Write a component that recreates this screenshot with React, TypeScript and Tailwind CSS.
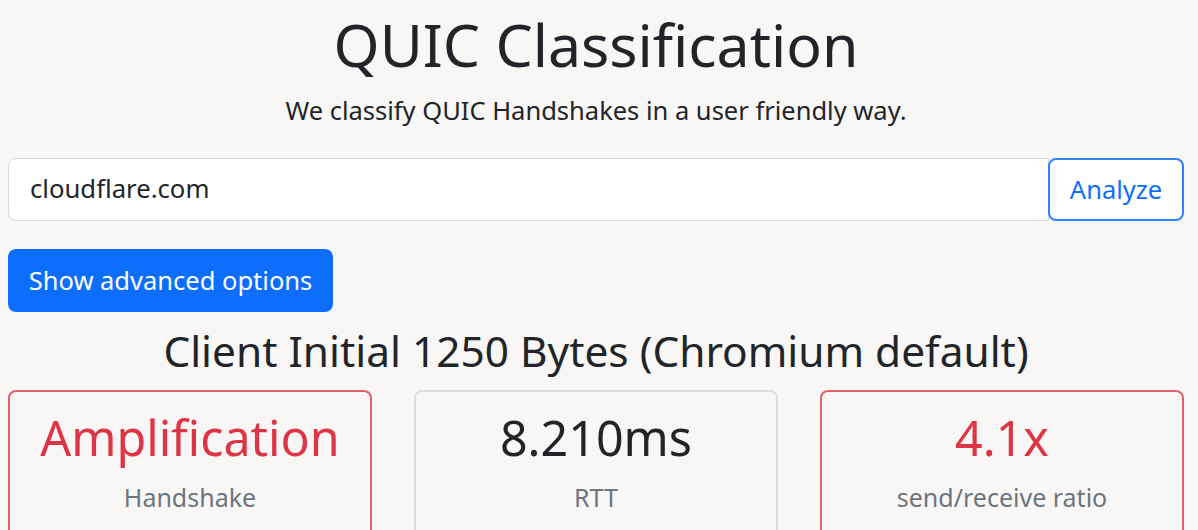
import React from "react";

export default function App() {
  return (
    <div
      className="h-[530px] overflow-hidden w-full bg-[#f8f7f5] text-[#212529] pl-[8px] pr-[14px]"
      style={{ fontFamily: '"Noto Sans", "Open Sans", sans-serif' }}
    >
      <h1 className="text-center text-[59px] leading-[72px] pt-[8px] font-normal">QUIC Classification</h1>
      <p className="text-center text-[25.5px] leading-[36px] mt-[12px]">
        We classify QUIC Handshakes in a user friendly way.
      </p>
      <div className="flex mt-[30px] h-[63px]">
        <div className="flex-1 flex items-center bg-white border border-[#d6d9dd] rounded-l-[8px] px-[21px] text-[25.7px]">
          cloudflare.com
        </div>
        <button className="w-[136px] bg-white border-2 border-[#2f81fd] rounded-[8px] text-[#0d6efd] text-[25.5px] -ml-[1px]">
          Analyze
        </button>
      </div>
      <button className="mt-[28px] h-[63px] w-[325px] bg-[#0d6efd] text-white rounded-[8px] text-[25.5px]">
        Show advanced options
      </button>
      <h2 className="text-center text-[42.4px] leading-[50px] mt-[14px]">
        Client Initial 1250 Bytes (Chromium default)
      </h2>
      <div className="grid grid-cols-3 gap-[42px] mt-[14px]">
        <div className="border-2 border-[#e4606d] rounded-[8px] h-[200px] flex flex-col items-center pt-[13px]">
          <div className="text-[48.4px] leading-[64px] text-[#dc3545]">Amplification</div>
          <div className="text-[25px] leading-[36px] mt-[10px] text-[#6c757d]">Handshake</div>
        </div>
        <div className="border-2 border-[#dcdcdc] rounded-[8px] h-[200px] flex flex-col items-center pt-[13px]">
          <div className="text-[48.4px] leading-[64px] text-[#212529]">8.210ms</div>
          <div className="text-[25px] leading-[36px] mt-[10px] text-[#6c757d]">RTT</div>
        </div>
        <div className="border-2 border-[#e4606d] rounded-[8px] h-[200px] flex flex-col items-center pt-[13px]">
          <div className="text-[48.4px] leading-[64px] text-[#dc3545]">4.1x</div>
          <div className="text-[25px] leading-[36px] mt-[10px] text-[#6c757d]">send/receive ratio</div>
        </div>
      </div>
    </div>
  );
}
